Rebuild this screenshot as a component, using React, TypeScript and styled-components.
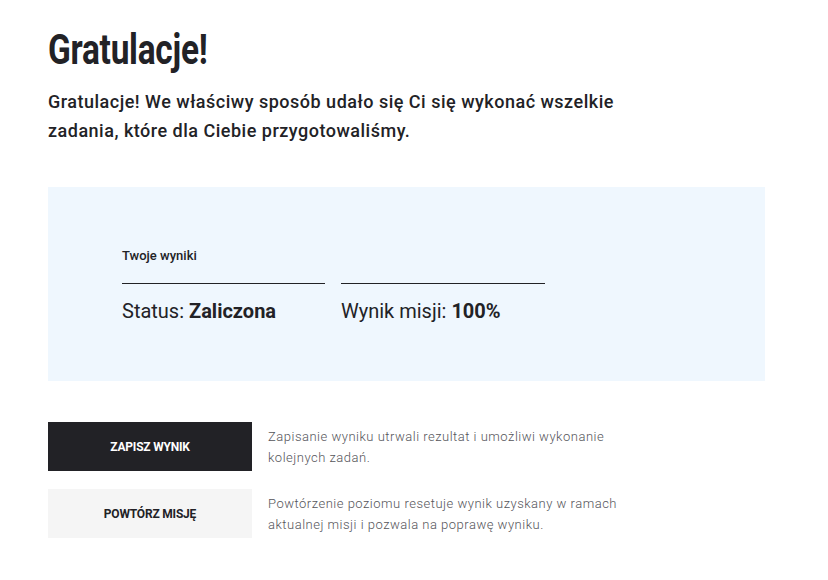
import React from "react";
import styled, { createGlobalStyle } from "styled-components";

const Global = createGlobalStyle`
  html, body { margin: 0; padding: 0; background: #ffffff; }
  body { font-family: Roboto, "Liberation Sans", sans-serif; color: #222226; }
`;

const Page = styled.main`
  width: 717px;
  padding: 26px 0 0 48px;
`;

const Title = styled.h1`
  margin: 0;
  height: 48px;
  font-family: Roboto, "Liberation Sans", sans-serif;
  font-weight: 700;
  font-size: 42px;
  line-height: 48px;
  color: #222226;
  letter-spacing: -0.3px;
`;

const TitleText = styled.span`
  display: inline-block;
  transform: scaleX(0.795);
  transform-origin: left center;
`;

const Lead = styled.p`
  margin: 13px 0 0;
  width: 600px;
  font-size: 18px;
  font-weight: 500;
  line-height: 29px;
  letter-spacing: 0.5px;
  color: #222226;
`;

const ResultsPanel = styled.section`
  margin-top: 42px;
  height: 194px;
  box-sizing: border-box;
  background: #eff7fe;
  padding: 61px 0 0 74px;
`;

const PanelLabel = styled.div`
  font-size: 13px;
  font-weight: 500;
  line-height: 16px;
  color: #222226;
`;

const Columns = styled.div`
  display: grid;
  grid-template-columns: 203px 204px;
  column-gap: 16px;
  margin-top: 19px;
`;

const Stat = styled.div`
  border-top: 1px solid #222226;
  padding-top: 15px;
  font-size: 20px;
  line-height: 24px;
  font-weight: 400;
  color: #222226;
  white-space: nowrap;
  b { font-weight: 700; }
`;

const Actions = styled.div`
  display: flex;
  flex-direction: column;
  gap: 18px;
  margin-top: 41px;
`;

const ActionRow = styled.div`
  display: flex;
  align-items: flex-start;
  gap: 16px;
`;

const ActionButton = styled.button<{ $dark?: boolean }>`
  flex: none;
  width: 204px;
  height: 49px;
  border: 0;
  padding: 0;
  background: ${(p) => (p.$dark ? "#222226" : "#f5f5f5")};
  color: ${(p) => (p.$dark ? "#ffffff" : "#222226")};
  font-family: Roboto, "Liberation Sans", sans-serif;
  font-size: 12px;
  font-weight: 700;
  letter-spacing: -0.2px;
  text-transform: uppercase;
  cursor: pointer;
`;

const ActionNote = styled.p`
  margin: 4px 0 0;
  width: 360px;
  font-size: 13px;
  font-weight: 300;
  line-height: 21px;
  letter-spacing: 0.5px;
  color: #55555a;
`;

export default function App() {
  return (
    <>
      <Global />
      <Page>
        <Title>
          <TitleText>Gratulacje!</TitleText>
        </Title>
        <Lead>
          Gratulacje! We właściwy sposób udało się Ci się wykonać wszelkie zadania, które dla Ciebie
          przygotowaliśmy.
        </Lead>
        <ResultsPanel>
          <PanelLabel>Twoje wyniki</PanelLabel>
          <Columns>
            <Stat>
              Status: <b>Zaliczona</b>
            </Stat>
            <Stat>
              Wynik misji: <b>100%</b>
            </Stat>
          </Columns>
        </ResultsPanel>
        <Actions>
          <ActionRow>
            <ActionButton $dark>Zapisz wynik</ActionButton>
            <ActionNote>Zapisanie wyniku utrwali rezultat i umożliwi wykonanie kolejnych zadań.</ActionNote>
          </ActionRow>
          <ActionRow>
            <ActionButton>Powtórz misję</ActionButton>
            <ActionNote>
              Powtórzenie poziomu resetuje wynik uzyskany w ramach aktualnej misji i pozwala na poprawę
              wyniku.
            </ActionNote>
          </ActionRow>
        </Actions>
      </Page>
    </>
  );
}
